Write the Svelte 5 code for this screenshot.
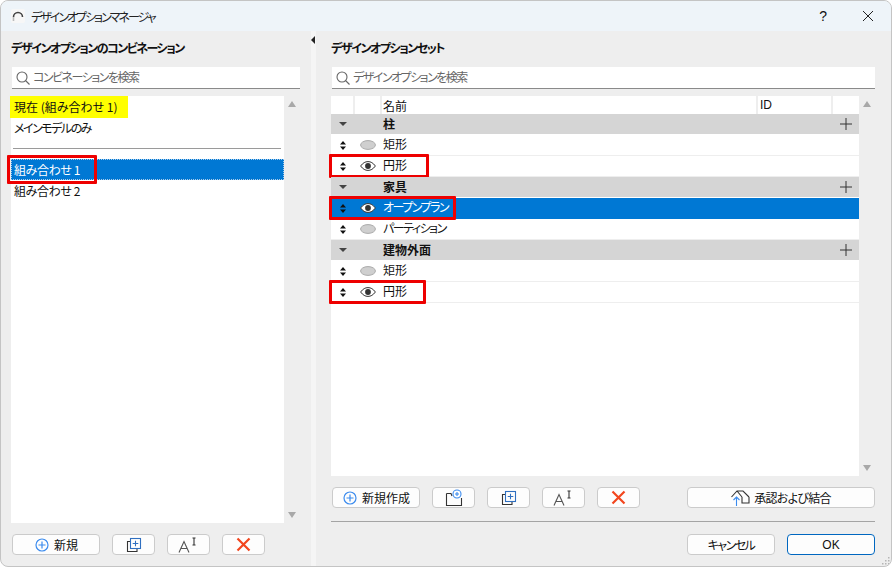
<script>
  const groups = [
    { name: '柱', rows: [
      { name: '矩形', on: false },
      { name: '円形', on: true, mark: 100 }
    ] },
    { name: '家具', rows: [
      { name: 'オープンプラン', on: true, selected: true, mark: 127, kana: true },
      { name: 'パーティション', on: false, kana: true }
    ] },
    { name: '建物外面', rows: [
      { name: '矩形', on: false },
      { name: '円形', on: true, mark: 97 }
    ] }
  ]
</script>

{#snippet plus()}
  <svg width="16" height="16" viewBox="0 0 16 16" fill="none" stroke="#3b8bee" stroke-width="1.2">
    <circle cx="8" cy="8" r="6" /><path d="M8 4.500v7M4.500 8h7" />
  </svg>
{/snippet}
{#snippet duplicate()}
  <svg width="16" height="16" viewBox="0 0 16 16" fill="none" stroke-width="1.1">
    <path d="M4 4.500H1.500v10H11V12" stroke="#333" />
    <rect x="4.500" y="1.500" width="10" height="10" stroke="#2f6fc0" />
    <path d="M9.500 3.700v5.600M6.700 6.500h5.600" stroke="#2f6fc0" />
  </svg>
{/snippet}
{#snippet rename()}
  <svg width="22" height="16" viewBox="0 0 22 16" fill="none" stroke="#555" stroke-width="1.1">
    <path d="M1 15.500 6 4.500l5 11M2.800 11.500h6.400" />
    <path d="M14.500 1h3M14.500 8h3M16 1v7" stroke="#333" />
  </svg>
{/snippet}
{#snippet cross()}
  <svg width="15" height="15" viewBox="0 0 15 15" fill="none" stroke="#f2461e" stroke-width="2.200">
    <path d="M1.500 1.500l12 12M13.500 1.500l-12 12" />
  </svg>
{/snippet}
{#snippet search()}
  <svg width="14" height="14" viewBox="0 0 14 14" fill="none" stroke="#666" stroke-width="1.100">
    <circle cx="6" cy="6" r="5" /><path d="M9.500 9.500 13.500 13.500" />
  </svg>
{/snippet}
{#snippet updown()}
  <svg width="6" height="9" viewBox="0 0 6 9" fill="#111">
    <path d="M3 0 6 3.500H0zM3 9 0 5.500h6z" />
  </svg>
{/snippet}
{#snippet eye(on)}
  {#if on}
    <svg width="16" height="10" viewBox="0 0 16 10">
      <path d="M.6 5C3 1.800 5.300.6 8 .6s5 1.200 7.400 4.400C13 8.200 10.700 9.400 8 9.400S3 8.200.6 5Z" fill="#fff" stroke="#333" stroke-width="1" />
      <circle cx="8" cy="5" r="2.900" fill="#333" />
    </svg>
  {:else}
    <svg width="16" height="10" viewBox="0 0 16 10">
      <ellipse cx="8" cy="5" rx="7.400" ry="4.400" fill="#cfcfcf" stroke="#aaa" stroke-width="1" />
    </svg>
  {/if}
{/snippet}
{#snippet scroller()}
  <div class="scroller">
    <i class="arrow up"></i>
    <i class="arrow down"></i>
  </div>
{/snippet}

<div class="window">
  <header class="titlebar">
    <svg width="14" height="14" viewBox="0 0 14 14" fill="none">
      <rect width="14" height="14" rx="2" fill="#f7f7f7" />
      <path d="M2.500 12V8" stroke="#bbb" stroke-width="1.600" />
      <path d="M2.500 8a4.500 4.500 0 0 1 9 0" stroke="#444" stroke-width="1.600" />
    </svg>
    <span class="title">デザインオプションマネージャ</span>
    <span class="help">?</span>
    <svg width="12" height="12" viewBox="0 0 12 12" stroke="#222" stroke-width="1"><path d="M1 1l10 10M11 1 1 11" /></svg>
  </header>

  <div class="body">
    <section class="left">
      <h2 class="kana">デザインオプションのコンビネーション</h2>
      <div class="searchbox">{@render search()}<span class="kana">コンビネーションを検索</span></div>
      <div class="listwrap">
        <div class="list">
          <div class="item"><span class="yellow">現在 (組み合わせ 1)</span></div>
          <div class="item kana">メインモデルのみ</div>
          <div class="rule"></div>
          <div class="item selected tight">組み合わせ 1<i class="mark leftmark"></i></div>
          <div class="item tight">組み合わせ 2</div>
        </div>
        {@render scroller()}
      </div>
      <div class="tools">
        <button class="wide">{@render plus()}新規</button>
        <button class="square">{@render duplicate()}</button>
        <button class="square">{@render rename()}</button>
        <button class="square">{@render cross()}</button>
      </div>
    </section>

    <div class="splitter"><i class="handle"></i></div>

    <section class="right">
      <h2 class="kana">デザインオプションセット</h2>
      <div class="searchbox">{@render search()}<span class="kana">デザインオプションを検索</span></div>
      <div class="listwrap">
        <div class="table">
          <div class="thead">
            <span class="c1"></span><span class="c2"></span><span class="c3">名前</span><span class="c4">ID</span><span class="c5"></span>
          </div>
          {#each groups as g}
            <div class="group">
              <span class="c1"><i class="caret"></i></span>
              <span class="c2"></span>
              <strong class="c3">{g.name}</strong>
              <svg class="add" width="12" height="12" viewBox="0 0 12 12" stroke="#333" stroke-width="1"><path d="M6 0v12M0 6h12" /></svg>
            </div>
            {#each g.rows as r}
              <div class="row" class:selected={r.selected}>
                <span class="c1">{@render updown()}</span>
                <span class="c2">{@render eye(r.on)}</span>
                <span class="c3" class:kana={r.kana}>{r.name}</span>
                {#if r.mark}<i class="mark" style="width: {r.mark}px"></i>{/if}
              </div>
            {/each}
          {/each}
        </div>
        {@render scroller()}
      </div>
      <div class="tools lower">
        <button class="wide">{@render plus()}新規作成</button>
        <button class="square">
          <svg width="18" height="18" viewBox="0 0 18 18" fill="none" stroke-width="1.100">
            <path d="M1.500 4.500v12h15V9M1.500 4.500H6l1 2.500" stroke="#333" />
            <circle cx="12" cy="5" r="4" stroke="#3b8bee" fill="#fff" /><path d="M12 3v4M10 5h4" stroke="#3b8bee" />
          </svg>
        </button>
        <button class="square">{@render duplicate()}</button>
        <button class="square">{@render rename()}</button>
        <button class="square">{@render cross()}</button>
        <button class="merge">
          <svg width="19" height="17" viewBox="0 0 19 17" fill="none" stroke-width="1.100">
            <path d="M.5 8 6 2h6l6 6M6 2l5 6M11 8v6h7V8" stroke="#333" />
            <path d="M5.500 17V8M2.500 11l3-3 3 3" stroke="#3b8bee" />
          </svg>
          <span class="tight2">承認および結合</span>
        </button>
      </div>
      <div class="separator"></div>
      <div class="actions">
        <button class="action kana">キャンセル</button>
        <button class="action ok">OK</button>
      </div>
    </section>
  </div>
  <svg class="grip" width="9" height="9" viewBox="0 0 9 9" fill="#b5b5b5">
    <rect x="7" y="1" width="1.500" height="1.500" /><rect x="4" y="4" width="1.500" height="1.500" /><rect x="7" y="4" width="1.500" height="1.500" />
    <rect x="1" y="7" width="1.500" height="1.500" /><rect x="4" y="7" width="1.500" height="1.500" /><rect x="7" y="7" width="1.500" height="1.500" />
  </svg>
</div>

<style>
  :global(body) {
    margin: 0;
    background: #fff;
  }

  .window {
    position: relative;
    box-sizing: border-box;
    width: 892px;
    height: 567px;
    display: flex;
    flex-direction: column;
    background: #eeeeee;
    border: 1px solid #c4c4c4;
    border-radius: 8px;
    overflow: hidden;
    font-family: "Noto Sans CJK JP", "Liberation Sans", sans-serif;
    font-feature-settings: "palt";
    font-size: 12px;
    color: #111;
  }

  /* the original UI font has much narrower kana than Noto */
  .kana {
    letter-spacing: -1.500px;
  }

  .tight {
    letter-spacing: -0.400px;
  }

  .tight2 {
    letter-spacing: -0.700px;
  }

  .titlebar {
    height: 30px;
    flex: none;
    display: flex;
    align-items: center;
    padding: 0 17px 0 10px;
    background: #eef4f9;
  }

  .title {
    margin-left: 6px;
    font-size: 12px;
    letter-spacing: -2px;
    color: #222;
  }

  .help {
    margin-left: auto;
    margin-right: 35px;
    font-family: "Liberation Sans", sans-serif;
    font-size: 14px;
  }

  .body {
    flex: 1;
    display: flex;
    min-height: 0;
  }

  .left {
    box-sizing: border-box;
    width: 310px;
    flex: none;
    padding: 0 11px 0 10px;
    display: flex;
    flex-direction: column;
  }

  .splitter {
    width: 5px;
    flex: none;
    background: #f5f5f5;
    position: relative;
  }

  .handle {
    position: absolute;
    left: 0;
    top: 5px;
    border: 4px solid transparent;
    border-left-width: 0;
    border-right: 4px solid #222;
  }

  .right {
    flex: 1;
    min-width: 0;
    padding: 0 16px 0 15px;
    display: flex;
    flex-direction: column;
  }

  h2 {
    margin: 0;
    height: 36px;
    line-height: 34px;
    font-size: 12px;
    font-weight: 700;
  }

  .searchbox {
    box-sizing: border-box;
    height: 22px;
    margin-left: 1px;
    background: #fff;
    border-bottom: 1px solid #8a8a8a;
    display: flex;
    align-items: center;
    gap: 3px;
    padding-left: 4px;
    color: #666;
    font-size: 12px;
  }

  .searchbox span {
    margin-top: -2px;
  }

  .listwrap {
    display: flex;
    flex: 1;
    min-height: 0;
    margin-top: 7px;
  }

  .list,
  .table {
    flex: 1;
    min-width: 0;
    background: #fff;
  }

  .scroller {
    width: 16px;
    flex: none;
    display: flex;
    flex-direction: column;
    justify-content: space-between;
    align-items: center;
    padding: 5px 0;
  }

  .arrow {
    border: 4px solid transparent;
  }

  .arrow.up {
    border-top-width: 0;
    border-bottom: 6px solid #a8a8a8;
  }

  .arrow.down {
    border-bottom-width: 0;
    border-top: 6px solid #a8a8a8;
  }

  .item {
    position: relative;
    height: 21px;
    line-height: 21px;
    padding-left: 3px;
  }

  .yellow {
    display: inline-block;
    height: 22px;
    margin-left: -4px;
    padding: 0 10px 0 4px;
    background: #ffff00;
  }

  .rule {
    height: 1px;
    margin: 10px 3px 10px 2px;
    background: #9a9a9a;
  }

  .item.selected {
    background: #0078d4;
    color: #fff;
    outline: 1px dotted #a9cbe9;
    outline-offset: -1px;
  }

  .mark {
    position: absolute;
    left: -2px;
    top: -2px;
    box-sizing: border-box;
    height: 24px;
    border: 3px solid #ee0000;
    border-radius: 1px;
  }

  .leftmark {
    left: -4px;
    top: -4px;
    width: 90px;
    height: 29px;
  }

  .tools {
    display: flex;
    gap: 12px;
    margin: 11px 0 11px 1px;
  }

  .tools.lower {
    margin-bottom: 0;
  }

  button {
    box-sizing: border-box;
    height: 21px;
    padding: 0;
    background: #fdfdfd;
    border: 1px solid #cbcbcb;
    border-radius: 4px;
    display: flex;
    align-items: center;
    justify-content: center;
    font-family: inherit;
    font-feature-settings: inherit;
    font-size: 12px;
    color: #111;
  }

  .wide {
    width: 88px;
    gap: 4px;
  }

  .square {
    width: 43px;
  }

  .merge {
    width: 188px;
    gap: 4px;
    margin-left: auto;
  }

  .separator {
    height: 1px;
    margin-top: 13px;
    background: #a4a4a4;
  }

  .actions {
    display: flex;
    justify-content: flex-end;
    gap: 12px;
    margin: 12px 0 11px;
  }

  .action {
    width: 88px;
  }

  .ok {
    border-color: #0067c0;
    font-family: "Liberation Sans", sans-serif;
  }

  .thead,
  .group,
  .row {
    position: relative;
    display: flex;
    align-items: center;
  }

  .thead {
    height: 18px;
  }

  .thead span {
    height: 100%;
    line-height: 19px;
    border-right: 2px solid #eee;
    box-sizing: border-box;
  }

  .c1 {
    width: 24px;
    flex: none;
    display: flex;
    justify-content: center;
    align-items: center;
  }

  .c2 {
    box-sizing: border-box;
    width: 27px;
    padding-right: 2px;
    flex: none;
    display: flex;
    justify-content: center;
    align-items: center;
  }

  .c3 {
    padding-left: 1px;
  }

  .group .c3 {
    margin-top: -2px;
  }

  .row .c3 {
    margin-top: -3px;
  }

  .thead .c3 {
    flex: 1;
  }

  .c4 {
    width: 75px;
    flex: none;
    padding-left: 2px;
    font-family: "Liberation Sans", sans-serif;
  }

  .c5 {
    width: 26px;
    flex: none;
    border-right: none !important;
  }

  .group {
    height: 20px;
    margin-bottom: 1px;
    background: #d5d5d5;
  }

  .caret {
    border: 4px solid transparent;
    border-bottom-width: 0;
    border-top: 4px solid #444;
  }

  .add {
    margin-left: auto;
    margin-right: 7px;
  }

  .row {
    height: 20px;
    border-bottom: 1px solid #eee;
  }

  .row.selected {
    background: #0078d4;
    border-bottom-color: #0078d4;
    color: #fff;
  }

  .grip {
    position: absolute;
    right: 1px;
    bottom: 1px;
  }
</style>
